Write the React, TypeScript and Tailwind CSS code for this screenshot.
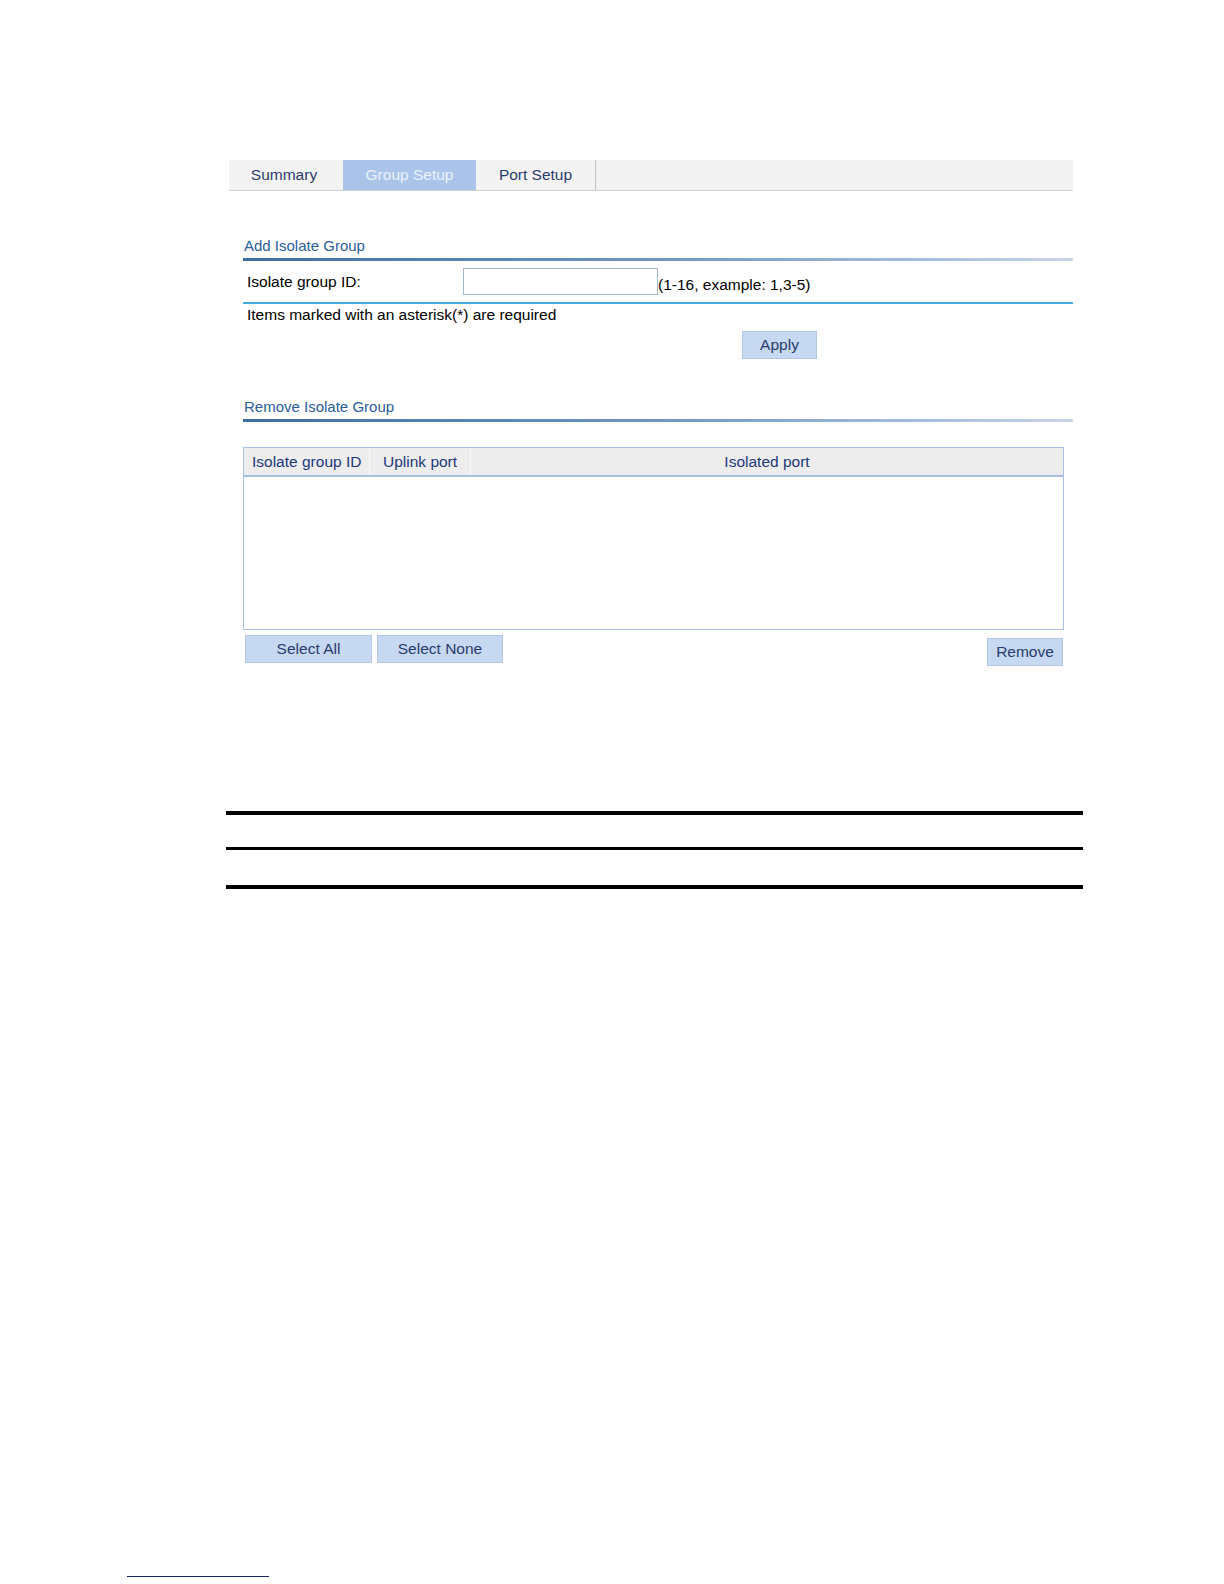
const font = "font-['Liberation_Sans',Arial,sans-serif]";

function SectionTitle({ title, className }: { title: string; className: string }) {
  return (
    <div className={className}>
      <div className="pl-[15px] text-[15px] leading-[16px] text-[#2b5d9b]">{title}</div>
      <div className="mt-[4px] ml-[14px] h-[3px] bg-gradient-to-r from-[#3d6ea9] via-[#6f95c4] to-[#c6d5ea]" />
    </div>
  );
}

function BlueButton({ label, className }: { label: string; className: string }) {
  return (
    <button
      type="button"
      className={`h-[28px] border border-[#b4c8e6] bg-[#c6d8f2] text-[15.5px] leading-[26px] text-[#2a3b6c] ${className}`}
    >
      {label}
    </button>
  );
}

export default function App() {
  return (
    <div className={`min-h-[1584px] bg-white text-black ${font}`}>
      <div className="w-[1073px] pt-[160px] pl-[229px]">
        {/* tabs */}
        <div className="flex h-[31px] border-b border-[#d0d0d0] bg-[#f3f3f3] text-[15.5px] text-[#2c3d6d]">
          <div className="flex w-[114px] items-center justify-center pr-[4px]">Summary</div>
          <div className="flex w-[133px] items-center justify-center bg-[#a9c4e8] text-[#edf2fa]">Group Setup</div>
          <div className="flex w-[120px] items-center justify-center border-r border-[#c4c4c4]">Port Setup</div>
        </div>

        <SectionTitle title="Add Isolate Group" className="mt-[47px]" />

        <div className="ml-[14px] flex h-[41px] items-center pl-[4px] text-[15.5px]">
          <span className="w-[216px]">Isolate group ID:</span>
          <div className="h-[27px] w-[195px] border border-[#a3b6cd] bg-white" />
          <span className="pt-[6px]">(1-16, example: 1,3-5)</span>
        </div>
        <div className="ml-[14px] h-[2px] bg-[#48abe2]" />
        <div className="ml-[18px] text-[15.5px] leading-[21px]">Items marked with an asterisk(*) are required</div>
        <div className="mt-[6px] pl-[513px]">
          <BlueButton label="Apply" className="w-[75px]" />
        </div>

        <SectionTitle title="Remove Isolate Group" className="mt-[40px]" />

        <div className="ml-[14px] mt-[25px] w-[821px]">
          <div className="h-[183px] border border-[#a9c0e2]">
            <div className="flex h-[29px] border-b-2 border-[#a9c0e2] bg-[#ededed] text-[15.5px] text-[#22387a]">
              <div className="flex w-[126px] items-center border-r border-[#f8f8f8] pl-[8px]">Isolate group ID</div>
              <div className="flex w-[101px] items-center border-r border-[#f8f8f8] pl-[13px]">Uplink port</div>
              <div className="flex flex-1 items-center justify-center">Isolated port</div>
            </div>
          </div>
          <div className="mt-[5px] flex items-start pl-[2px] pr-[1px]">
            <BlueButton label="Select All" className="w-[127px]" />
            <BlueButton label="Select None" className="ml-[5px] w-[126px]" />
            <BlueButton label="Remove" className="ml-auto mt-[3px] w-[76px]" />
          </div>
        </div>
      </div>

      <div className="mt-[145px] ml-[226px] w-[857px]">
        <div className="h-[4px] bg-black" />
        <div className="mt-[32px] h-[3px] bg-black" />
        <div className="mt-[35px] h-[4px] bg-black" />
      </div>

      <div className="mt-[687px] ml-[127px] h-px w-[142px] bg-[#1c2472]" />
    </div>
  );
}
